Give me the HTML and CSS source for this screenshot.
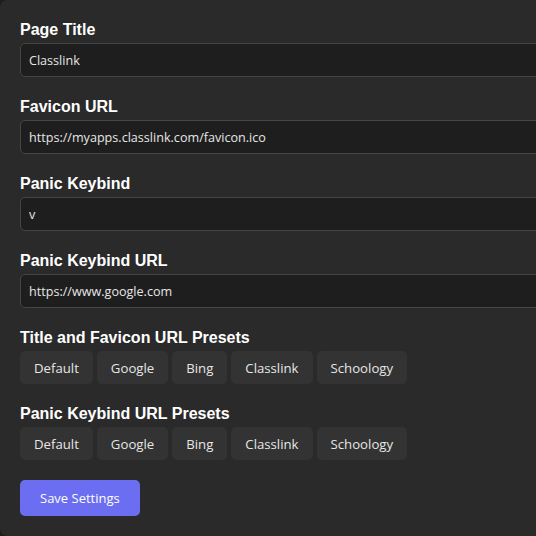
FILE: index.html
```html
<!DOCTYPE html>
<html>
<head>
<meta charset="utf-8">
<link rel="stylesheet" href="styles.css">
</head>
<body>
<div class="panel">
  <div class="field">
    <label class="label">Page Title</label>
    <input class="input" type="text" value="Classlink">
  </div>
  <div class="field">
    <label class="label">Favicon URL</label>
    <input class="input" type="text" value="https://myapps.classlink.com/favicon.ico">
  </div>
  <div class="field">
    <label class="label">Panic Keybind</label>
    <input class="input" type="text" value="v">
  </div>
  <div class="field">
    <label class="label">Panic Keybind URL</label>
    <input class="input" type="text" value="https://www.google.com">
  </div>
  <div class="field">
    <div class="label">Title and Favicon URL Presets</div>
    <div class="presets">
      <button class="preset">Default</button>
      <button class="preset">Google</button>
      <button class="preset">Bing</button>
      <button class="preset">Classlink</button>
      <button class="preset">Schoology</button>
    </div>
  </div>
  <div class="field">
    <div class="label">Panic Keybind URL Presets</div>
    <div class="presets">
      <button class="preset">Default</button>
      <button class="preset">Google</button>
      <button class="preset">Bing</button>
      <button class="preset">Classlink</button>
      <button class="preset">Schoology</button>
    </div>
  </div>
  <button class="save">Save Settings</button>
</div>
</body>
</html>
```
FILE: styles.css
```css
html, body {
  margin: 0;
  padding: 0;
  background: #1e1e1e;
  overflow: hidden;
}
body {
  width: 536px;
  height: 536px;
}
.panel {
  width: 620px;
  height: 536px;
  box-sizing: border-box;
  padding: 20px;
  background: #2a2a2a;
  border-radius: 8px;
  font-family: "Liberation Sans", Arial, sans-serif;
}
.field {
  margin-bottom: 20px;
}
.label {
  display: block;
  font-size: 16px;
  line-height: 20px;
  font-weight: bold;
  color: #ffffff;
  margin-bottom: 3px;
}
.input {
  display: block;
  width: 100%;
  height: 34px;
  box-sizing: border-box;
  padding: 0 8px;
  background: #1e1e1e;
  border: 1px solid #454545;
  border-radius: 5px;
  color: #e6e6e6;
  font-family: "Open Sans", "Liberation Sans", sans-serif;
  font-size: 12.6px;
  outline: none;
}
.presets {
  display: flex;
  gap: 4px;
}
.preset {
  height: 33px;
  padding: 0 14px;
  background: #333333;
  border: none;
  border-radius: 5px;
  color: #e6e6e6;
  font-family: "Open Sans", "Liberation Sans", sans-serif;
  font-size: 13.2px;
}
.save {
  height: 36px;
  padding: 0 20px;
  background: #6b6ef0;
  border: none;
  border-radius: 5px;
  color: #ffffff;
  font-family: "Open Sans", "Liberation Sans", sans-serif;
  font-size: 13px;
}
```
